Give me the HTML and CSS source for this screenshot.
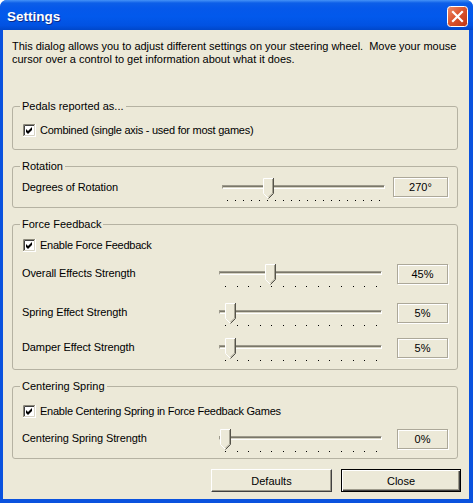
FILE: index.html
```html
<!DOCTYPE html>
<html>
<head>
<meta charset="utf-8">
<title>Settings</title>
<link rel="stylesheet" href="styles.css">
</head>
<body>
<div class="window">
  <div class="titlebar">
    <span class="title">Settings</span>
    <span class="close-btn">
      <svg width="21" height="21" viewBox="0 0 21 21">
        <defs>
          <linearGradient id="cg" x1="0" y1="0" x2="1" y2="1">
            <stop offset="0" stop-color="#ee8e6c"/>
            <stop offset="0.45" stop-color="#dc5630"/>
            <stop offset="1" stop-color="#bf3411"/>
          </linearGradient>
        </defs>
        <rect x="0.5" y="0.5" width="20" height="20" rx="3" fill="url(#cg)" stroke="#fff"/>
        <path d="M6 6L15 15M15 6L6 15" stroke="#fff" stroke-width="2.2" stroke-linecap="square"/>
      </svg>
    </span>
  </div>
  <div class="frame">
    <div class="client">
      <p class="intro">This dialog allows you to adjust different settings on your steering wheel.&nbsp; Move your mouse<br>cursor over a control to get information about what it does.</p>

      <fieldset class="group pedals">
        <legend>Pedals reported as...</legend>
        <label class="check">
          <svg class="cb" width="13" height="13" viewBox="0 0 13 13"><rect width="13" height="13" fill="#fff"/><path d="M0.5 12V0.5H12" stroke="#8a8778" fill="none"/><path d="M1.5 11V1.5H11" stroke="#404040" fill="none"/><path d="M0 12.5H12.5V0" stroke="#fff" fill="none"/><path d="M1 11.5H11.5V1" stroke="#d6d3c4" fill="none"/><path d="M3 5L5 7L9 3V6L5 10L3 8Z" fill="#000"/></svg>
          <span>Combined (single axis - used for most games)</span>
        </label>
      </fieldset>

      <fieldset class="group rotation">
        <legend>Rotation</legend>
        <div class="srow rot">
          <span class="slabel">Degrees of Rotation</span>
          <div class="slider">
            <div class="track"></div>
            <svg class="thumb" style="left:42px" width="11" height="21" viewBox="0 0 11 21"><path d="M0.5 0.5H10.5V15.5L5.5 20.5L0.5 15.5Z" fill="#ece9d8"/><path d="M0.5 15.5V0.5H10" fill="none" stroke="#fff"/><path d="M10.5 0V15.5L5.5 20.5" fill="none" stroke="#55534a"/><path d="M9.5 1V15.1L5.5 19.1" fill="none" stroke="#a5a292"/><path d="M0.5 15.5L5 20" fill="none" stroke="#fff"/></svg>
            <div class="ticks"><i></i><i></i><i></i><i></i><i></i><i></i><i></i><i></i><i></i><i></i><i></i><i></i><i></i><i></i><i></i><i></i><i></i><i></i><i></i><i></i></div>
          </div>
          <span class="value">270°</span>
        </div>
      </fieldset>

      <fieldset class="group ff">
        <legend>Force Feedback</legend>
        <label class="check">
          <svg class="cb" width="13" height="13" viewBox="0 0 13 13"><rect width="13" height="13" fill="#fff"/><path d="M0.5 12V0.5H12" stroke="#8a8778" fill="none"/><path d="M1.5 11V1.5H11" stroke="#404040" fill="none"/><path d="M0 12.5H12.5V0" stroke="#fff" fill="none"/><path d="M1 11.5H11.5V1" stroke="#d6d3c4" fill="none"/><path d="M3 5L5 7L9 3V6L5 10L3 8Z" fill="#000"/></svg>
          <span>Enable Force Feedback</span>
        </label>
        <div class="srow overall">
          <span class="slabel">Overall Effects Strength</span>
          <div class="slider">
            <div class="track"></div>
            <svg class="thumb" style="left:47px" width="11" height="21" viewBox="0 0 11 21"><path d="M0.5 0.5H10.5V15.5L5.5 20.5L0.5 15.5Z" fill="#ece9d8"/><path d="M0.5 15.5V0.5H10" fill="none" stroke="#fff"/><path d="M10.5 0V15.5L5.5 20.5" fill="none" stroke="#55534a"/><path d="M9.5 1V15.1L5.5 19.1" fill="none" stroke="#a5a292"/><path d="M0.5 15.5L5 20" fill="none" stroke="#fff"/></svg>
            <div class="ticks"><i></i><i></i><i></i><i></i><i></i><i></i><i></i><i></i><i></i><i></i><i></i><i></i><i></i><i></i></div>
          </div>
          <span class="value">45%</span>
        </div>
        <div class="srow spring">
          <span class="slabel">Spring Effect Strength</span>
          <div class="slider">
            <div class="track"></div>
            <svg class="thumb" style="left:7px" width="11" height="21" viewBox="0 0 11 21"><path d="M0.5 0.5H10.5V15.5L5.5 20.5L0.5 15.5Z" fill="#ece9d8"/><path d="M0.5 15.5V0.5H10" fill="none" stroke="#fff"/><path d="M10.5 0V15.5L5.5 20.5" fill="none" stroke="#55534a"/><path d="M9.5 1V15.1L5.5 19.1" fill="none" stroke="#a5a292"/><path d="M0.5 15.5L5 20" fill="none" stroke="#fff"/></svg>
            <div class="ticks"><i></i><i></i><i></i><i></i><i></i><i></i><i></i><i></i><i></i><i></i><i></i><i></i><i></i><i></i></div>
          </div>
          <span class="value">5%</span>
        </div>
        <div class="srow damper">
          <span class="slabel">Damper Effect Strength</span>
          <div class="slider">
            <div class="track"></div>
            <svg class="thumb" style="left:7px" width="11" height="21" viewBox="0 0 11 21"><path d="M0.5 0.5H10.5V15.5L5.5 20.5L0.5 15.5Z" fill="#ece9d8"/><path d="M0.5 15.5V0.5H10" fill="none" stroke="#fff"/><path d="M10.5 0V15.5L5.5 20.5" fill="none" stroke="#55534a"/><path d="M9.5 1V15.1L5.5 19.1" fill="none" stroke="#a5a292"/><path d="M0.5 15.5L5 20" fill="none" stroke="#fff"/></svg>
            <div class="ticks"><i></i><i></i><i></i><i></i><i></i><i></i><i></i><i></i><i></i><i></i><i></i><i></i><i></i><i></i></div>
          </div>
          <span class="value">5%</span>
        </div>
      </fieldset>

      <fieldset class="group centering">
        <legend>Centering Spring</legend>
        <label class="check">
          <svg class="cb" width="13" height="13" viewBox="0 0 13 13"><rect width="13" height="13" fill="#fff"/><path d="M0.5 12V0.5H12" stroke="#8a8778" fill="none"/><path d="M1.5 11V1.5H11" stroke="#404040" fill="none"/><path d="M0 12.5H12.5V0" stroke="#fff" fill="none"/><path d="M1 11.5H11.5V1" stroke="#d6d3c4" fill="none"/><path d="M3 5L5 7L9 3V6L5 10L3 8Z" fill="#000"/></svg>
          <span>Enable Centering Spring in Force Feedback Games</span>
        </label>
        <div class="srow strength">
          <span class="slabel">Centering Spring Strength</span>
          <div class="slider">
            <div class="track"></div>
            <svg class="thumb" style="left:2px" width="11" height="21" viewBox="0 0 11 21"><path d="M0.5 0.5H10.5V15.5L5.5 20.5L0.5 15.5Z" fill="#ece9d8"/><path d="M0.5 15.5V0.5H10" fill="none" stroke="#fff"/><path d="M10.5 0V15.5L5.5 20.5" fill="none" stroke="#55534a"/><path d="M9.5 1V15.1L5.5 19.1" fill="none" stroke="#a5a292"/><path d="M0.5 15.5L5 20" fill="none" stroke="#fff"/></svg>
            <div class="ticks"><i></i><i></i><i></i><i></i><i></i><i></i><i></i><i></i><i></i><i></i><i></i><i></i><i></i><i></i></div>
          </div>
          <span class="value">0%</span>
        </div>
      </fieldset>

      <div class="buttons">
        <button class="btn">Defaults</button>
        <button class="btn default">Close</button>
      </div>
    </div>
  </div>
</div>
</body>
</html>
```
FILE: styles.css
```css
* { box-sizing: border-box; }
html, body { margin: 0; padding: 0; }
body {
  width: 473px;
  height: 503px;
  overflow: hidden;
  background: #ffffff;
  font-family: "Liberation Sans", Arial, sans-serif;
  font-size: 11px;
  color: #000;
}
.window {
  width: 473px;
  height: 503px;
  display: flex;
  flex-direction: column;
  border-radius: 7px 7px 0 0;
  overflow: hidden;
  background: #0a52de;
}
.titlebar {
  height: 30px;
  flex: none;
  display: flex;
  align-items: center;
  justify-content: space-between;
  padding: 2px 5px 0 7px;
  background: linear-gradient(#4592f7 0, #0d5fe8 3px, #0558ea 8px, #0259ec 55%, #0152e2 85%, #0047c9 100%);
}
.title {
  color: #fff;
  font-weight: bold;
  font-size: 13.5px;
  text-shadow: 1px 1px 0 #0b2a8a;
}
.close-btn { display: flex; width: 21px; height: 21px; }
.frame {
  flex: 1;
  display: flex;
  padding: 0 4px 4px 3px;
  background: #0a52de;
}
.client {
  flex: 1;
  display: flex;
  flex-direction: column;
  background: #ece9d8;
  padding: 10px 11px 6px 9px;
}
.intro { margin: 0; line-height: 13px; white-space: nowrap; letter-spacing: -0.02px; }

.group {
  margin: 0;
  min-width: 0;
  border: 1px solid #b5b2a2;
  border-radius: 3px;
  padding: 0 9px 0 9px;
}
.group legend {
  padding: 0 2px;
  margin-left: -2px;
  line-height: 13px;
}
.pedals { margin-top: 34px; padding-top: 11px; padding-bottom: 12px; }
.rotation { margin-top: 10px; padding-top: 5px; padding-bottom: 3px; }
.ff { margin-top: 10px; padding-top: 8px; padding-bottom: 5px; }
.centering { margin-top: 10px; padding-top: 12px; padding-bottom: 3px; }

.check {
  display: flex;
  align-items: center;
  gap: 4px;
  margin-left: 1px;
  line-height: 13px;
}
.check span { letter-spacing: -0.25px; }
.cb { flex: none; display: block; }

.srow {
  display: flex;
  align-items: flex-start;
  height: 26px;
}
.srow.overall { margin-top: 12px; }
.srow.spring { margin-top: 13px; }
.srow.damper { margin-top: 9px; }
.srow.strength { margin-top: 11px; }

.slabel {
  width: 196px;
  flex: none;
  margin-top: 3px;
  line-height: 13px;
  letter-spacing: -0.1px;
}
.rot .slabel { width: 199px; }

.slider {
  position: relative;
  width: 168px;
  height: 26px;
  flex: none;
}
.track {
  margin: 7px 4px 0 1px;
  height: 4px;
  border-top: 1px solid #9d9a8b;
  border-left: 1px solid #9d9a8b;
  border-bottom: 1px solid #ffffff;
  border-right: 1px solid #ffffff;
  background: linear-gradient(#7a776a 0 1px, #d6d3c3 1px);
}
.thumb { position: absolute; top: 0; display: block; }
.ticks {
  display: flex;
  justify-content: space-between;
  margin: 11px 9px 0 7px;
}
.rot .ticks { margin: 11px 9px 0 6px; }
.ticks i { width: 1px; height: 1px; background: #000; display: block; }

.value {
  flex: none;
  width: 51px;
  height: 20px;
  margin-left: 11px;
  border: 1px solid #aca899;
  box-shadow: inset 1px 1px 0 #fff, 1px 1px 0 #fff;
  display: flex;
  align-items: center;
  justify-content: center;
  line-height: 13px;
}
.rot .value { width: 55px; margin-left: 4px; margin-top: -1px; }

.buttons {
  display: flex;
  justify-content: flex-end;
  gap: 9px;
  margin-top: 10px;
  margin-right: -3px;
}
.btn {
  width: 121px;
  height: 23px;
  padding: 0;
  font-family: "Liberation Sans", Arial, sans-serif;
  font-size: 11px;
  color: #000;
  background: #ece9d8;
  border: 1px solid;
  border-color: #ffffff #404040 #404040 #ffffff;
  box-shadow: inset -1px -1px 0 #9d9a8b;
}
.btn.default {
  width: 120px;
  border: 1px solid #000;
  box-shadow: inset 1px 1px 0 #fff, inset -1px -1px 0 #404040, inset -2px -2px 0 #9d9a8b;
}
```
